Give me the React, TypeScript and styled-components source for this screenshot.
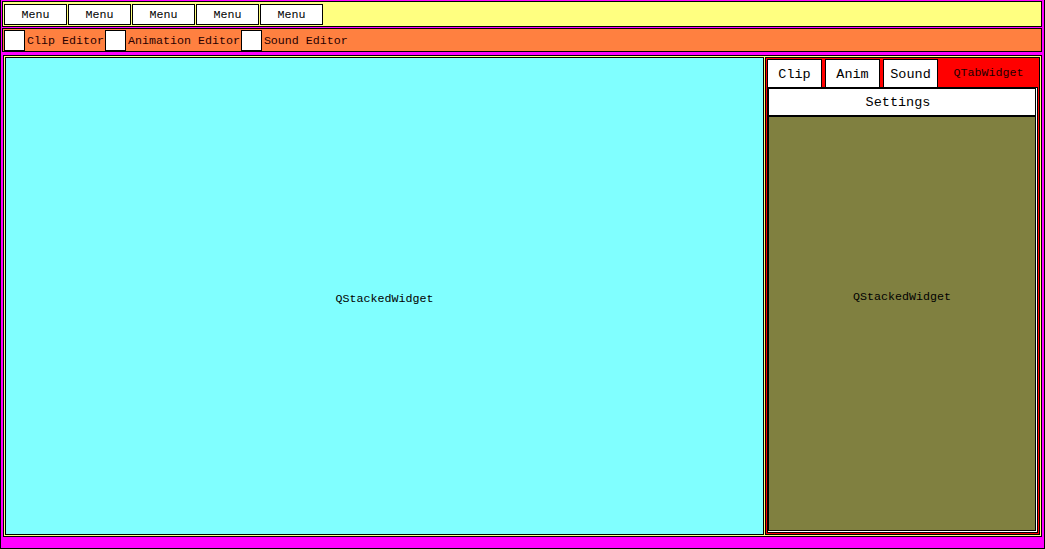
import React from "react";
import styled, { createGlobalStyle } from "styled-components";

const GlobalStyle = createGlobalStyle`
  html, body {
    margin: 0;
    padding: 0;
    background: #ff00ff;
  }
  * {
    box-sizing: border-box;
  }
`;

const Window = styled.div`
  width: 1045px;
  height: 549px;
  display: flex;
  flex-direction: column;
  background: #ff00ff;
  border: 1px solid #000;
  border-top: none;
  padding: 1px 2px 0 1px;
  font-family: "Liberation Mono", "DejaVu Sans Mono", monospace;
  font-size: 11.67px;
  color: #000;
  overflow: hidden;
`;

const MenuBar = styled.div`
  height: 26px;
  display: flex;
  gap: 1px;
  background: #ffff80;
  border: 1px solid #000;
  padding: 2px 1px 1px 1px;
`;

const MenuButton = styled.button`
  width: 63px;
  height: 21px;
  padding: 0;
  margin: 0;
  background: #fff;
  border: 1px solid #000;
  font: inherit;
  color: #000;
  display: flex;
  align-items: center;
  justify-content: center;
`;

const ToolBar = styled.div`
  height: 24px;
  margin-top: 1px;
  display: flex;
  align-items: flex-start;
  background: #ff8040;
  border: 1px solid #000;
  padding: 1px 1px 0 1px;
`;

const ToolItem = styled.label`
  display: flex;
  align-items: center;
  height: 21px;
  padding-right: 1px;
`;

const Check = styled.span`
  width: 21px;
  height: 21px;
  background: #fff;
  border: 1px solid #000;
  margin-right: 2px;
  flex-shrink: 0;
`;

const ToolLabel = styled.span`
  color: #2a0000;
  white-space: nowrap;
  line-height: 21px;
  padding-top: 1px;
`;

const Central = styled.div`
  flex: 1;
  margin: 3px 0 0 1px;
  display: flex;
  gap: 1px;
  background: #ffff80;
  border: 1px solid #000;
  padding: 1px;
`;

const Stacked = styled.div<{ $bg: string; $shift: number }>`
  flex: 1;
  display: flex;
  align-items: center;
  justify-content: center;
  background: ${(p) => p.$bg};
  border: 1px solid #000;
  padding-top: ${(p) => (p.$shift < 0 ? -p.$shift : 0)}px;
  padding-bottom: ${(p) => (p.$shift > 0 ? p.$shift : 0)}px;
`;

const TabWidget = styled.div`
  width: 275px;
  flex-shrink: 0;
  display: flex;
  flex-direction: column;
  background: #ff0000;
  border: 1px solid #000;
  padding: 1px;
`;

const TabBar = styled.div`
  height: 28px;
  display: flex;
  gap: 3px;
`;

const Tab = styled.div`
  width: 55px;
  background: #fff;
  border: 1px solid #000;
  border-bottom: none;
  display: flex;
  align-items: center;
  justify-content: center;
  font-size: 13.5px;
  padding-top: 1px;
`;

const TabCorner = styled.div`
  flex: 1;
  margin-left: -2px;
  display: flex;
  align-items: center;
  justify-content: center;
  color: #1a0000;
`;

const TabPane = styled.div`
  flex: 1;
  display: flex;
  flex-direction: column;
  background: #fff;
  border: 1px solid #000;
  padding: 0 1px 1px 0;
`;

const SettingsButton = styled.div`
  height: 28px;
  background: #fff;
  border: 1px solid #000;
  display: flex;
  align-items: center;
  justify-content: center;
  font-size: 13.5px;
  padding-right: 8px;
`;

const StatusBar = styled.div`
  height: 11px;
  background: #ff00ff;
`;

const menus = ["Menu", "Menu", "Menu", "Menu", "Menu"];
const editors = ["Clip Editor", "Animation Editor", "Sound Editor"];
const tabs = ["Clip", "Anim", "Sound"];

export default function App() {
  return (
    <>
      <GlobalStyle />
      <Window>
        <MenuBar>
          {menus.map((m, i) => (
            <MenuButton key={i}>{m}</MenuButton>
          ))}
        </MenuBar>
        <ToolBar>
          {editors.map((e) => (
            <ToolItem key={e}>
              <Check />
              <ToolLabel>{e}</ToolLabel>
            </ToolItem>
          ))}
        </ToolBar>
        <Central>
          <Stacked $bg="#80ffff" $shift={-5}>
            QStackedWidget
          </Stacked>
          <TabWidget>
            <TabBar>
              {tabs.map((t) => (
                <Tab key={t}>{t}</Tab>
              ))}
              <TabCorner>QTabWidget</TabCorner>
            </TabBar>
            <TabPane>
              <SettingsButton>Settings</SettingsButton>
              <Stacked $bg="#808040" $shift={54}>
                QStackedWidget
              </Stacked>
            </TabPane>
          </TabWidget>
        </Central>
        <StatusBar />
      </Window>
    </>
  );
}
